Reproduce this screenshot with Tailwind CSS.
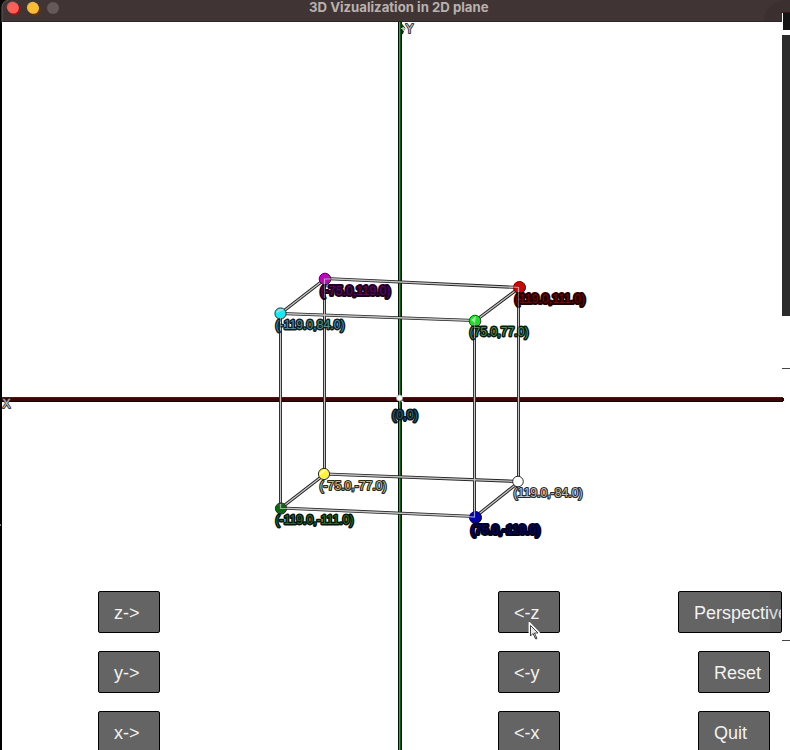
<!DOCTYPE html>
<html lang="en">
<head>
<meta charset="utf-8">
<title>3D Vizualization in 2D plane</title>
<script src="https://cdn.jsdelivr.net/npm/@tailwindcss/browser@4"></script>
</head>
<body class="bg-white">
<div class="relative flex h-[750px] w-[790px] flex-col overflow-hidden bg-white font-['Liberation_Sans',sans-serif]">
  <header class="relative flex h-[22px] shrink-0 items-center justify-center border-b border-[#302424] bg-[#403534]">
    <svg class="absolute top-0 left-0" width="64" height="22" viewBox="0 0 64 22">
      <path d="M0 0H8Q2 1 2 8V22H0Z" fill="#080808"/>
      <path d="M8 .5Q2 1 2 8V22" fill="none" stroke="#625756"/>
      <circle cx="14.800" cy="9.400" r="6" fill="#a40f10"/><circle cx="12.500" cy="7.300" r="5.700" fill="#a87470"/><circle cx="13.500" cy="8.100" r="5.400" fill="#fe5f58"/>
      <circle cx="35" cy="10.200" r="6" fill="#613600"/><circle cx="32.700" cy="7.500" r="5.800" fill="#c9b499"/><circle cx="33.500" cy="8.300" r="5.500" fill="#fcbc32"/>
      <circle cx="53" cy="8" r="6" fill="#655a59"/>
    </svg>
    <h1 class="font-['Inter',sans-serif] text-[13px] leading-none font-bold whitespace-nowrap text-[#b9b1b0]">
      <svg class="absolute top-0 left-[300px] opacity-[.999]" width="200" height="20"><text x="9" y="12" textLength="179.500" lengthAdjust="spacingAndGlyphs" fill="currentColor">3D Vizualization in 2D plane</text></svg>
    </h1>
  </header>

  <main class="relative flex-1 border-l-2 border-black pt-[569px]">
    <svg class="absolute top-[-22px] left-[-2px] opacity-[.999]" width="790" height="750" viewBox="0 0 790 750">
      <!-- axes -->
      <path d="M2 399.500H783" stroke="#150000" stroke-width="5"/>
      <path d="M2 397.500H783" stroke="#3a2020" stroke-width="1"/>
      <path d="M2 399.500H783" stroke="#430204" stroke-width="3"/>
      <path d="M782 398H784V401H782Z" fill="#250102"/>
      <path d="M400 22V750" stroke="#071008" stroke-width="4"/>
      <path d="M399.500 22V750" stroke="#5d8f60" stroke-width="1"/>
      <path d="M400.500 22V750" stroke="#0b5a10" stroke-width="1"/>
      <path d="M401 24L404 28L402 34" stroke="#063b0a" stroke-width="2" fill="none"/>
      <path d="M401 28.500H406M403.500 27V31" stroke="#b4c8b4" stroke-width="1"/>
      <path d="M0 525H1" stroke="#fff"/>
      <!-- cube edges -->
      <g fill="none">
        <g stroke="#222" stroke-width="3.200">
          <path d="M280.500 313.500L474.500 320.500M281 508L475 516.500M325 278.500L519 287.500M325 474L519 481.500M281 313L325 279M475 321L519 288M475 517L519 482M281 508L325 474"/>
          <path d="M280.500 314V508M324.500 279V474M474.500 321V517M518.500 288V482" stroke="#333" stroke-width="3"/>
        </g>
        <g stroke="#c4c4c4" stroke-width="1.300">
          <path d="M280.500 313.500L474.500 320.500M281 508L475 516.500M325 278.500L519 287.500M325 474L519 481.500M281 313L325 279M475 321L519 288M475 517L519 482M281 508L325 474"/>
          <path d="M280.500 314V508M324.500 279V474M474.500 321V517M518.500 288V482" stroke-width="1"/>
        </g>
      </g>
      <!-- vertices -->
      <g stroke="#292929" stroke-width="1">
        <circle cx="325" cy="279" r="5.800" fill="#b80bb8" stroke="#4b084b"/>
        <circle cx="519.500" cy="287.500" r="6" fill="#c90808" stroke="#500505"/>
        <circle cx="280.500" cy="313.500" r="5.600" fill="#17e9f4"/>
        <circle cx="475" cy="321" r="5.800" fill="#22dc2c" stroke="#155a19"/>
        <circle cx="324" cy="474" r="5.600" fill="#fff33d"/>
        <circle cx="518" cy="481.500" r="5.300" fill="#fff"/>
        <circle cx="281" cy="508.500" r="5.600" fill="#086710"/>
        <circle cx="475.500" cy="517.500" r="6" fill="#0202a8" stroke="#020250"/>
      </g>
      <g stroke="none">
        <path d="M276 313A5 5 0 0 1 284 310Z" fill="#c2cccc"/>
        <path d="M471 320L476 316L475 323Z" fill="#9feaa3"/>
        <path d="M320 475A5 5 0 0 1 327 470Z" fill="#fff9bb"/>
        <path d="M277 506A5 5 0 0 1 284 505Z" fill="#4b554c"/>
      </g>
      <g fill="none" stroke="#d0c7d0" stroke-width="1.200" stroke-opacity=".75">
        <path d="M324.500 284V279H331"/><path d="M513 287L518.500 287.500V293"/>
        <path d="M280.500 504V508.500H287"/><path d="M474.500 511V517L469 516.700"/>
      </g>
      <circle cx="399.500" cy="398" r="3" fill="#fff" stroke="#a7b1a7" stroke-width=".7"/>
      <path d="M402 401L405 405" stroke="#fff" stroke-width="2"/>
      <!-- coordinate labels -->
      <g font-size="12" stroke-width="2.200" stroke-linejoin="round" paint-order="stroke" font-family="Liberation Sans, sans-serif">
        <text x="320.500" y="295" textLength="70" lengthAdjust="spacingAndGlyphs" fill="#650666" stroke="#1c021e" stroke-width="4">(-75.0,119.0)</text>
        <text x="515" y="303" textLength="70" lengthAdjust="spacingAndGlyphs" fill="#780708" stroke="#250102" stroke-width="4">(119.0,111.0)</text>
        <text x="275.500" y="329" textLength="69" lengthAdjust="spacingAndGlyphs" fill="#46939c" stroke="#101c20" stroke-width="2.800">(-119.0,84.0)</text>
        <text x="469.500" y="336" textLength="59" lengthAdjust="spacingAndGlyphs" fill="#478b50" stroke="#0a1b0d" stroke-width="2.800">(75.0,77.0)</text>
        <text x="319.500" y="490" textLength="67" lengthAdjust="spacingAndGlyphs" fill="#bdb779" stroke="#28271d">(-75.0,-77.0)</text>
        <text x="513.500" y="497" textLength="69" lengthAdjust="spacingAndGlyphs" fill="#c0c0c0" stroke="#292929">(119.0,-84.0)</text>
        <text x="275.500" y="524" textLength="78" lengthAdjust="spacingAndGlyphs" fill="#286b32" stroke="#061309" stroke-width="2.800">(-119.0,-111.0)</text>
        <text x="471" y="534" textLength="69" lengthAdjust="spacingAndGlyphs" fill="#050567" stroke="#01011f" stroke-width="4">(75.0,-119.0)</text>
        <text x="392" y="418.500" textLength="26" lengthAdjust="spacingAndGlyphs" fill="#305b70" stroke="#071820" stroke-width="3">(0,0)</text>
        <g fill="#c5c0c0" stroke="#353535" stroke-width="1.800">
          <text x="405.500" y="32.500">Y</text>
          <text x="2.500" y="408">X</text>
        </g>
      </g>
      <path d="M474.500 323V338M518.500 290V338M280.500 318V330M324.500 284V298" fill="none" stroke="#c8c8c8" stroke-opacity=".45"/>
      <!-- edge of the windows behind -->
      <path d="M764 21Q765 4 784 0H790V12H782V21Z" fill="#3b302f"/>
      <path d="M782 12H790V13H782Z" fill="#3b1714"/>
      <path d="M782 13H783V30H782ZM782 30H790V35H782Z" fill="#fff"/>
      <path d="M783 13H790V30H783Z" fill="#141414"/>
      <path d="M782 35H790V316H782Z" fill="#2b2b2b"/>
      <path d="M782 368.500H790M782 640.500H790" stroke="#444"/>
    </svg>

    <div class="relative ml-24 grid w-[692px] grid-cols-[400px_180px_112px] gap-y-[18px] text-[18px] leading-none text-[#f2f2f2] opacity-[.999] *:h-[42px] *:rounded-[2px] *:border *:border-black *:bg-[#646464] *:pt-[2px] *:pl-[15px] *:text-left *:whitespace-nowrap">
      <button class="w-[62px]">z-&gt;</button>
      <button class="w-[62px]">&lt;-z</button>
      <button class="relative w-[104px] overflow-hidden">Perspective<span class="absolute top-0 right-0 h-full w-[11px] bg-[#444]/15"></span></button>
      <button class="w-[62px]">y-&gt;</button>
      <button class="w-[62px]">&lt;-y</button>
      <button class="ml-5 w-[72px]">Reset</button>
      <button class="w-[62px]">x-&gt;</button>
      <button class="w-[62px]">&lt;-x</button>
      <button class="ml-5 w-[72px]">Quit</button>
    </div>
    <svg class="absolute top-[600px] left-[526px]" width="14" height="20" viewBox="0 0 14 20">
      <path d="M1.500 1V16L4.500 13L7 18.500L10 17L7.500 12H12Z" fill="#555" stroke="#fff" stroke-width="1.800"/>
      <path d="M2.500 3.500V14L5 11.500L8 17L9 16.500L6.500 11H10Z" fill="#e9e9e9" stroke="#222" stroke-width=".8"/>
    </svg>
  </main>
</div>
</body>
</html>
